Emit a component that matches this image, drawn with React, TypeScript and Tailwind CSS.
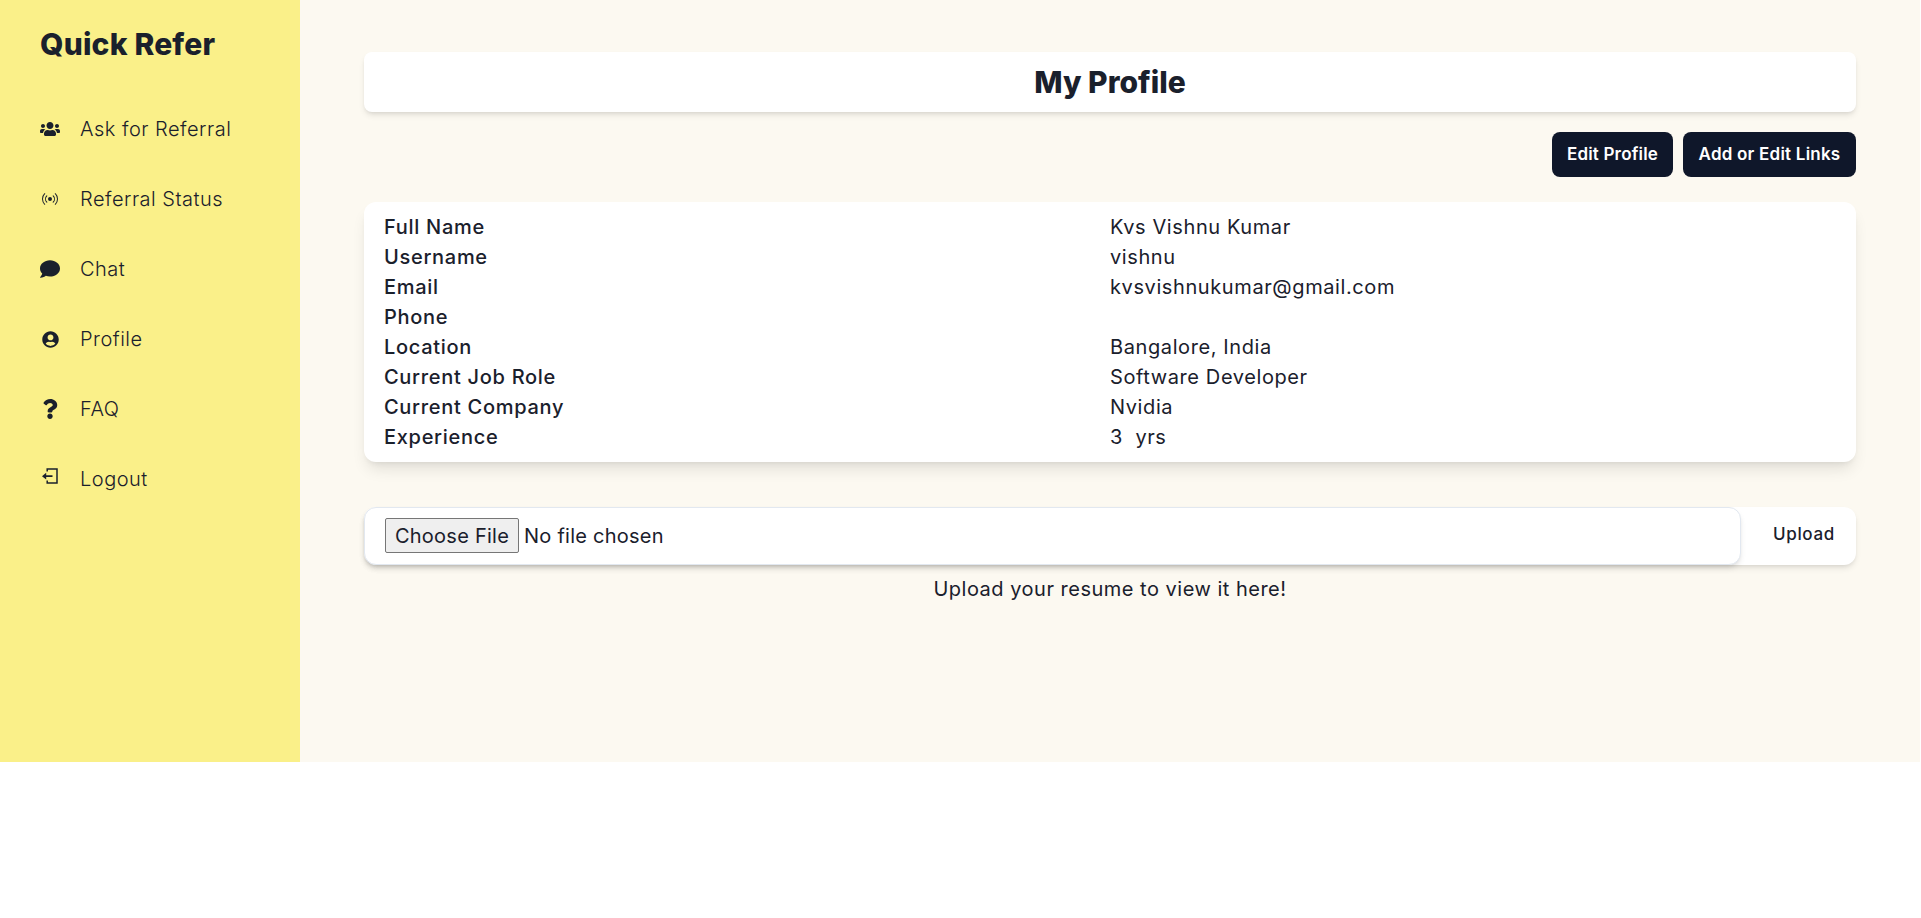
import { FaUsers, FaComment, FaUserCircle, FaQuestion } from "react-icons/fa";
import { BsBroadcast } from "react-icons/bs";

const LogoutIcon = () => (
  <svg width="16" height="16" viewBox="0 0 16 16" className="-mt-[6px]">
    <path d="M5.2 3.6V1h9.8v14H5.2v-2.6" fill="none" stroke="currentColor" strokeWidth="1.5" />
    <path d="M0 8.2 4.2 4.8v2.5h6.3v1.8H4.2v2.5z" fill="currentColor" />
  </svg>
);

const nav = [
  { label: "Ask for Referral", icon: <FaUsers size={20} /> },
  { label: "Referral Status", icon: <BsBroadcast size={16} /> },
  { label: "Chat", icon: <FaComment size={20} /> },
  { label: "Profile", icon: <FaUserCircle size={17} /> },
  { label: "FAQ", icon: <FaQuestion size={20} /> },
  { label: "Logout", icon: <LogoutIcon /> },
];

const rows = [
  ["Full Name", "Kvs Vishnu Kumar"],
  ["Username", "vishnu"],
  ["Email", "kvsvishnukumar@gmail.com"],
  ["Phone", ""],
  ["Location", "Bangalore, India"],
  ["Current Job Role", "Software Developer"],
  ["Current Company", "Nvidia"],
  ["Experience", "3  yrs"],
];

export default function App() {
  return (
    <div className="w-[1920px] h-[762px] flex text-[#1a202c] font-['Inter','Liberation_Sans',sans-serif]">
      <aside className="w-[300px] shrink-0 bg-[#faf089] pl-10 pt-[23px]">
        <h1 className="text-[30px] leading-[42px] font-extrabold tracking-[0.2px]">Quick Refer</h1>
        <nav className="mt-[29px] flex flex-col">
          {nav.map((n) => (
            <div key={n.label} className="h-[70px] flex items-center">
              <span className="w-10 flex shrink-0">
                <span className="w-5 flex justify-center">{n.icon}</span>
              </span>
              <span className="text-[20px] font-[350] tracking-[0.5px]">{n.label}</span>
            </div>
          ))}
        </nav>
      </aside>
      <main className="flex-1 bg-[#fcf9f1] px-16 pt-[52px]">
        <div className="h-[60px] bg-white rounded-lg shadow-md flex items-center justify-center">
          <h2 className="text-[30px] font-extrabold">My Profile</h2>
        </div>
        <div className="mt-5 flex justify-end gap-2.5">
          <button className="h-[45px] w-[121px] rounded-lg bg-[#0f172a] text-white text-[17px] font-semibold tracking-[0.17px]">Edit Profile</button>
          <button className="h-[45px] w-[173px] rounded-lg bg-[#0f172a] text-white text-[17px] font-semibold tracking-[0.22px]">Add or Edit Links</button>
        </div>
        <div className="mt-[25px] bg-white rounded-xl shadow-lg px-5 py-2.5 grid grid-cols-2 text-[20px] leading-[30px]">
          {rows.map(([k, v]) => (
            <div key={k} className="contents">
              <div className="font-medium tracking-[0.7px]">{k}</div>
              <div className="whitespace-pre font-normal tracking-[0.6px]">{v}</div>
            </div>
          ))}
        </div>
        <div className="mt-[45px] h-[58px] bg-white rounded-xl shadow-md flex items-center">
          <input
            type="file"
            className="w-[1377px] h-[58px] shrink-0 bg-white rounded-xl border border-[#e2e8f0] shadow-md px-5 py-[10px] text-[20px] leading-[30px] font-normal tracking-[0.25px] file:w-[134px] file:h-[35px] file:bg-[#efefef] file:border file:border-[#767676] file:mr-[5px] file:text-[20px] file:rounded-[2px]"
          />
          <span className="ml-[32px] -mt-[2px] text-[17px] font-medium tracking-[0.65px]">Upload</span>
        </div>
        <p className="mt-[9px] text-center text-[20px] leading-[30px] font-normal tracking-[0.5px]">Upload your resume to view it here!</p>
      </main>
    </div>
  );
}
